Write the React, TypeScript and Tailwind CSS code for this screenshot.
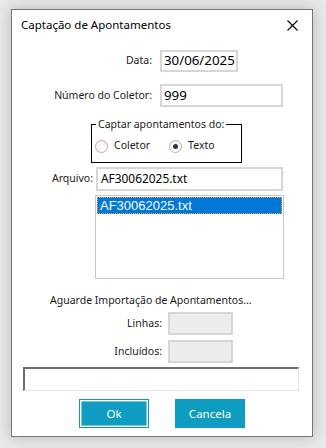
import React from "react";

const font = { fontFamily: '"Noto Sans", "Liberation Sans", sans-serif' };

function Radio({ checked }: { checked?: boolean }) {
  return (
    <span className="flex h-[13px] w-[13px] items-center justify-center rounded-full border border-[#c9a896] bg-gradient-to-br from-[#f3f3f3] to-[#ffffff]">
      {checked ? <span className="h-[5px] w-[5px] rounded-full bg-[#2a3550]" /> : null}
    </span>
  );
}

export default function App() {
  return (
    <div className="h-[448px] w-[326px] overflow-hidden bg-[#e9e9e9] pl-[11px] pt-[9px] text-[#1a1a1a]" style={font}>
      <div className="flex h-[428px] w-[302px] flex-col border border-[#767676] bg-white shadow-[0_0_14px_rgba(0,0,0,0.22)]">
        {/* Title bar */}
        <div className="flex h-[30px] items-center justify-between pl-[9px] pr-[14px]">
          <span className="text-[11.5px] leading-none text-black">Captação de Apontamentos</span>
          <svg width="11" height="11" viewBox="0 0 11 11" className="text-black">
            <path d="M0.5 0.5 L10.5 10.5 M10.5 0.5 L0.5 10.5" stroke="currentColor" strokeWidth="1.1" />
          </svg>
        </div>

        {/* Data */}
        <div className="mt-[10px] flex items-center">
          <span className="w-[140px] text-right text-[10.5px]">Data:</span>
          <div className="ml-[8px] flex h-[22px] w-[78px] items-center border-2 border-[#d6d6d6] pl-[2px] text-[13.3px] text-black">
            30/06/2025
          </div>
        </div>

        {/* Numero */}
        <div className="mt-[12px] flex items-center">
          <span className="w-[140px] text-right text-[10.5px]">Número do Coletor:</span>
          <div className="ml-[8px] flex h-[23px] w-[123px] items-center border-2 border-[#d6d6d6] pl-[2px] text-[13.3px] text-black">
            999
          </div>
        </div>

        {/* Group box */}
        <div className="relative ml-[79px] mt-[17px] flex h-[39px] w-[151px] items-end border border-black pb-[8px] pl-[3px]">
          <span className="absolute left-[4px] top-[-9px] bg-white px-[2px] text-[10.5px] leading-[16px]">
            Captar apontamentos do:
          </span>
          <div className="flex items-center gap-[6px]">
            <Radio />
            <span className="text-[10.5px]">Coletor</span>
          </div>
          <div className="ml-[19px] flex items-center gap-[6px]">
            <Radio checked />
            <span className="text-[10.5px]">Texto</span>
          </div>
        </div>

        {/* Arquivo */}
        <div className="mt-[4px] flex items-center">
          <span className="w-[81px] text-right text-[10.5px]">Arquivo:</span>
          <div className="ml-[3px] flex h-[24px] w-[187px] items-center border-2 border-[#d6d6d6] pl-[3px] text-[11.9px] text-black">
            AF30062025.txt
          </div>
        </div>

        {/* List */}
        <div className="ml-[83px] mt-[4px] h-[84px] w-[189px] border border-[#c6c6c6] p-[1px]">
          <div
            className="flex h-[17px] items-center border border-dotted border-[#f0a040] bg-[#0078d7] pl-[2px] text-[13px] text-white"
            style={{ fontFamily: '"Liberation Sans", Arial, sans-serif' }}
          >
            AF30062025.txt
          </div>
        </div>

        {/* Aguarde */}
        <div className="ml-[38px] mt-[13px] h-[16px] text-[10.5px] leading-[16px]">
          Aguarde Importação de Apontamentos...
        </div>

        {/* Linhas */}
        <div className="mt-[4px] flex items-center">
          <span className="w-[150px] text-right text-[10.5px]">Linhas:</span>
          <div className="ml-[6px] h-[23px] w-[65px] border-2 border-[#d6d6d6] bg-[#ececec]" />
        </div>

        {/* Incluidos */}
        <div className="mt-[5px] flex items-center">
          <span className="w-[150px] text-right text-[10.5px]">Incluídos:</span>
          <div className="ml-[6px] h-[23px] w-[65px] border-2 border-[#d6d6d6] bg-[#ececec]" />
        </div>

        {/* Progress */}
        <div className="ml-[11px] mt-[4px] h-[24px] w-[276px] border-b border-l-2 border-r border-t-2 border-b-[#e4e4e4] border-l-[#6e6e6e] border-r-[#e4e4e4] border-t-[#6e6e6e] bg-white" />

        {/* Buttons */}
        <div className="ml-[67px] mt-[8px] flex gap-[26px]">
          <div className="h-[29px] w-[70px] border border-[#1197b9] bg-white p-[1px]">
            <div className="flex h-full w-full items-center justify-center border border-[#7cc6da] bg-[#0e9cc0] text-[11.5px] text-white">
              Ok
            </div>
          </div>
          <div className="flex h-[29px] w-[70px] items-center justify-center bg-[#0e9cc0] text-[11.5px] text-white">
            Cancela
          </div>
        </div>
      </div>
    </div>
  );
}
